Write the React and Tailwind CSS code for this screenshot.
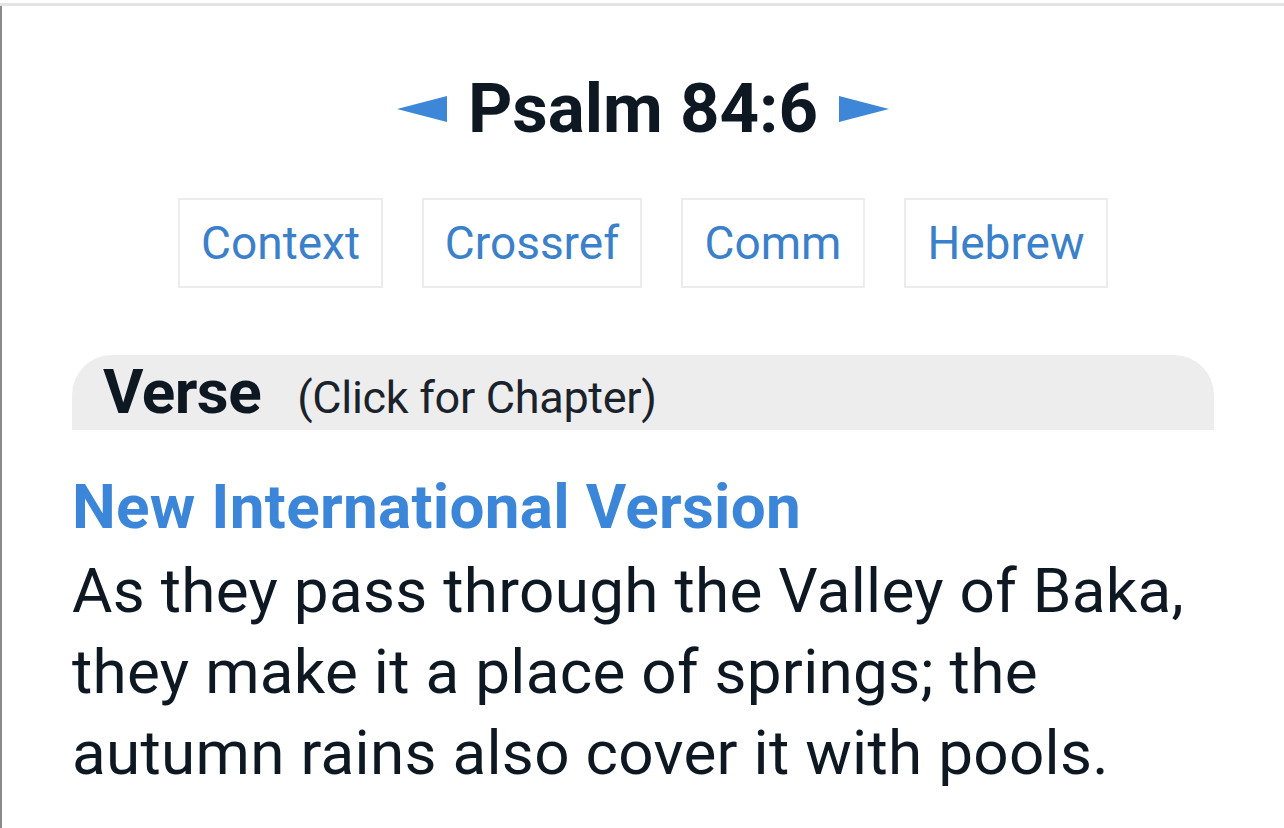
import React from 'react';

const tools = [
  { label: 'Context', w: 'w-[205px]' },
  { label: 'Crossref', w: 'w-[220px]' },
  { label: 'Comm', w: 'w-[184px]' },
  { label: 'Hebrew', w: 'w-[204px]' },
];

function Arrow({ dir }) {
  return (
    <svg width="50" height="26" viewBox="0 0 50 26" className="shrink-0">
      {dir === 'left' ? (
        <polygon points="0,13 50,0 50,26" fill="#3d86d8" />
      ) : (
        <polygon points="50,13 0,0 0,26" fill="#3d86d8" />
      )}
    </svg>
  );
}

export default function App() {
  return (
    <div className="w-[1284px] h-[828px] overflow-hidden bg-white font-['Roboto',sans-serif] text-[#0e1822]">
      <div className="h-[3px] bg-white" />
      <div className="h-[3px] bg-[#e4e4e4]" />
      <div className="h-[822px] border-l-2 border-[#8a8a8a]">
        {/* Title */}
        <div className="flex items-center justify-center gap-[21px] pt-[68px]">
          <Arrow dir="left" />
          <h1 className="text-[69px] leading-none font-bold">Psalm 84:6</h1>
          <Arrow dir="right" />
        </div>

        {/* Tools */}
        <div className="flex justify-center gap-[39px] mt-[55px]">
          {tools.map(t => (
            <button
              key={t.label}
              className={`${t.w} h-[90px] border-2 border-[#ececec] bg-white text-[#3a80ca] text-[46px] leading-none`}
            >
              {t.label}
            </button>
          ))}
        </div>

        <div className="px-[70px]">
          {/* Verse bar */}
          <div className="mt-[67px] h-[75px] bg-[#ededed] rounded-t-[40px] flex items-baseline pl-[31px] pt-[6px]">
            <span className="text-[62px] leading-none font-bold tracking-[-0.5px] text-[#0e1822]">Verse</span>
            <span className="ml-[36px] text-[45px] leading-none text-[#1a222b] tracking-[-0.3px]">(Click for Chapter)</span>
          </div>

          {/* Version */}
          <div className="mt-[46px] text-[#3b86d8] text-[62px] leading-none font-bold tracking-[0.3px]">
            New International Version
          </div>
          <p className="mt-[12px] text-[62px] leading-[81px] tracking-[0.3px] text-[#0e1822]">
            As they pass through the Valley of Baka, they make it a place of springs; the autumn rains also cover it with pools.
          </p>
        </div>
      </div>
    </div>
  );
}
